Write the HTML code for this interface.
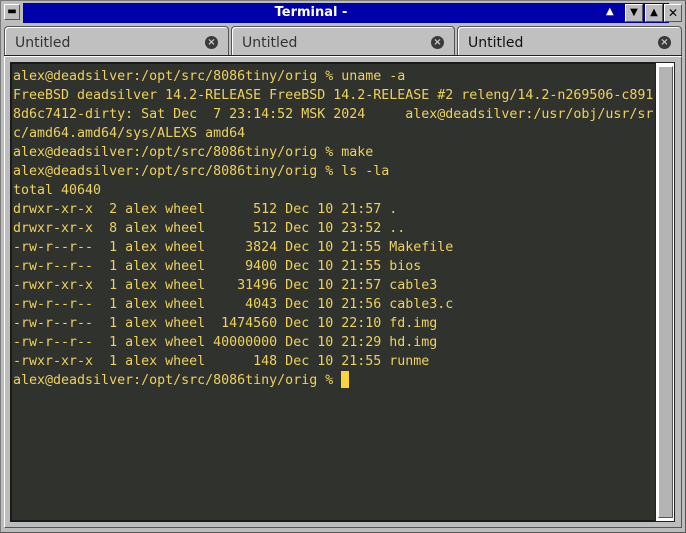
<!DOCTYPE html>
<html><head><style>
*{margin:0;padding:0;box-sizing:border-box}
body{width:686px;height:533px;background:#bdbdbd;position:relative;overflow:hidden;font-family:"DejaVu Sans",sans-serif}
.abs{position:absolute}
#frame{left:0;top:0;width:686px;height:533px;border:1px solid #7a7a7a;border-right-color:#555;border-bottom-color:#555}
#title{left:23px;top:3px;width:576px;height:20px;background:#0000aa;color:#fff;font-weight:bold;font-size:13px;text-align:center;line-height:20px}
#title span{position:absolute;left:0;right:0}
.btn{top:4px;width:18px;height:18px;background:#bdbdbd;border:1px solid #fff;border-right-color:#555;border-bottom-color:#555;font-size:10px;text-align:center;line-height:16px;color:#000}
.tab{top:26px;height:29px;background:#c0c0c0;border:1px solid #555;border-bottom:none;border-radius:4px 4px 0 0;font-size:14px;color:#333;padding:8px 0 0 10px;box-shadow:inset 1px 1px 0 #fff}
.x{position:absolute;right:10px;top:9px;width:13px;height:13px;border-radius:50%;background:#3a3a3a;color:#ccc;font-size:10px;line-height:13px;text-align:center;font-weight:bold}
#term{left:10px;top:62px;width:647px;height:460px;background:#30322e;border:2px solid #1a1a1a;overflow:hidden}
#term pre{position:absolute;left:1px;top:3px;font-family:"DejaVu Sans Mono","Liberation Mono",monospace;font-size:13.3px;line-height:19px;color:#eed25c;white-space:pre}
.cur{display:inline-block;width:8px;height:17px;background:#f7d53b;vertical-align:-4px}
#sb{left:655px;top:62px;width:20px;height:460px;background:#fff;border:1px solid #222}
#thumb{left:658px;top:66px;width:15px;height:452px;background:#b4b4b4;border:1px solid #555;border-top-color:#fff;border-left-color:#fff}
</style></head><body>
<div id="frame" class="abs"></div>
<div class="abs btn" style="left:4px;top:4px;width:16px;height:16px;line-height:14px;font-weight:bold">▬</div>
<div id="title" class="abs"><span>Terminal -</span></div>
<div class="abs" style="left:599px;top:3px;width:70px;height:20px;background:#0000aa"></div>
<div class="abs" style="left:606px;top:6px;color:#fff;font-size:10px">▲</div>
<div class="abs btn" style="left:625px">▼</div>
<div class="abs btn" style="left:645px">▲</div>
<div class="abs btn" style="left:664px;font-size:12px">✕</div>
<div class="abs tab" style="left:4px;width:225px">Untitled<div class="x">×</div></div>
<div class="abs tab" style="left:231px;width:224px">Untitled<div class="x">×</div></div>
<div class="abs tab" style="left:457px;width:225px;color:#111">Untitled<div class="x">×</div></div>
<div class="abs" style="left:4px;top:55px;width:678px;height:1px;background:#222"></div>
<div class="abs" style="left:4px;top:56px;width:678px;height:472px;border:1px solid #fff;border-right-color:#555;border-bottom-color:#555"></div>
<div id="term" class="abs"><pre>alex@deadsilver:/opt/src/8086tiny/orig % uname -a
FreeBSD deadsilver 14.2-RELEASE FreeBSD 14.2-RELEASE #2 releng/14.2-n269506-c891
8d6c7412-dirty: Sat Dec  7 23:14:52 MSK 2024     alex@deadsilver:/usr/obj/usr/sr
c/amd64.amd64/sys/ALEXS amd64
alex@deadsilver:/opt/src/8086tiny/orig % make
alex@deadsilver:/opt/src/8086tiny/orig % ls -la
total 40640
drwxr-xr-x  2 alex wheel      512 Dec 10 21:57 .
drwxr-xr-x  8 alex wheel      512 Dec 10 23:52 ..
-rw-r--r--  1 alex wheel     3824 Dec 10 21:55 Makefile
-rw-r--r--  1 alex wheel     9400 Dec 10 21:55 bios
-rwxr-xr-x  1 alex wheel    31496 Dec 10 21:57 cable3
-rw-r--r--  1 alex wheel     4043 Dec 10 21:56 cable3.c
-rw-r--r--  1 alex wheel  1474560 Dec 10 22:10 fd.img
-rw-r--r--  1 alex wheel 40000000 Dec 10 21:29 hd.img
-rwxr-xr-x  1 alex wheel      148 Dec 10 21:55 runme
alex@deadsilver:/opt/src/8086tiny/orig % <span class="cur"></span></pre></div>
<div id="sb" class="abs"></div>
<div id="thumb" class="abs"></div>
</body></html>
